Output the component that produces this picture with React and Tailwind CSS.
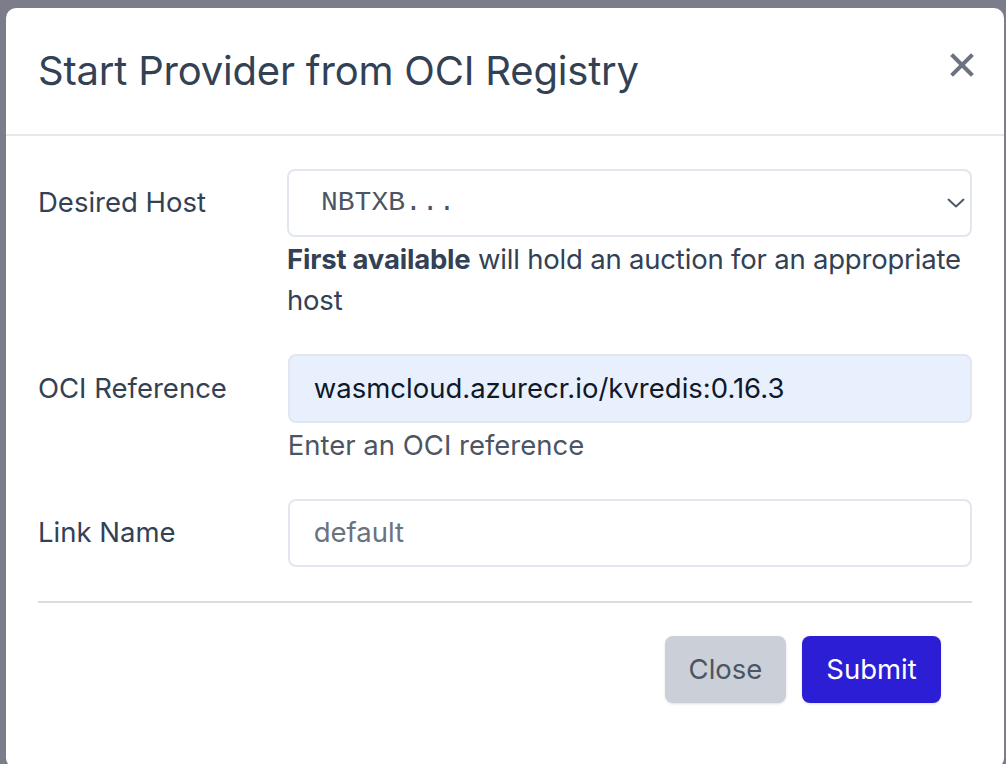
import React from "react";

const font = { fontFamily: "Inter, 'Noto Sans', sans-serif" };

export default function App() {
  return (
    <div className="w-[1006px] h-[764px] bg-[#7b7d8a] overflow-hidden" style={font}>
      <div className="ml-[6px] mt-[8px] w-[998px] h-[760px] rounded-[10px] bg-white flex flex-col">
        <div className="h-[128px] shrink-0 border-b-2 border-[#e5e7eb] px-[32px] flex items-center justify-between">
          <h1 className="text-[40px] text-[#334155] tracking-[-0.2px]">Start Provider from OCI Registry</h1>
          <button className="mr-[-2px] mt-[-12px] text-[#6b7280]">
            <svg width="24" height="24" viewBox="0 0 24 24" fill="none" stroke="currentColor" strokeWidth="4" strokeLinecap="square">
              <path d="M3 3 L21 21 M21 3 L3 21" />
            </svg>
          </button>
        </div>
        <div className="px-[32px] pt-[33px] flex flex-col">
          <div className="flex">
            <div className="w-[250px] h-[68px] flex items-center text-[27.5px] text-[#334155]">Desired Host</div>
            <div className="w-[685px] flex flex-col">
              <div className="h-[68px] rounded-[8px] border-2 border-[#e2e6ee] flex items-center justify-between pl-[32px] pr-[5px]">
                <span className="text-[28px] text-[#4b5563]" style={{ fontFamily: "'Liberation Mono', monospace" }}>NBTXB...</span>
                <svg width="18" height="10" viewBox="0 0 18 10" fill="none" stroke="#4b5563" strokeWidth="1.8" strokeLinecap="round" strokeLinejoin="round">
                  <path d="M1.5 1.5 L9 8.5 L16.5 1.5" />
                </svg>
              </div>
              <p className="mt-[2px] w-[700px] text-[27.5px] leading-[41px] tracking-[-0.2px] text-[#334155]">
                <span className="font-bold">First available</span> will hold an auction for an appropriate host
              </p>
            </div>
          </div>
          <div className="flex mt-[33px]">
            <div className="w-[250px] h-[69px] flex items-center text-[27.5px] text-[#334155]">OCI Reference</div>
            <div className="w-[685px] flex flex-col">
              <div className="h-[69px] rounded-[8px] border-2 border-[#e2e6ee] bg-[#e8f0fe] flex items-center pl-[24px]">
                <span className="text-[27.5px] text-[#111827]">wasmcloud.azurecr.io/kvredis:0.16.3</span>
              </div>
              <p className="mt-[2px] text-[27.5px] leading-[41px] text-[#4b5563]">Enter an OCI reference</p>
            </div>
          </div>
          <div className="flex mt-[33px]">
            <div className="w-[250px] h-[68px] flex items-center text-[27.5px] text-[#334155]">Link Name</div>
            <div className="w-[685px] h-[68px] rounded-[8px] border-2 border-[#e2e6ee] flex items-center pl-[24px]">
              <span className="text-[27.5px] text-[#6b7280]">default</span>
            </div>
          </div>
          <div className="mt-[34px] h-[2px] bg-[#d9dce1]" />
          <div className="mt-[33px] flex justify-end gap-[16px] pr-[31px]">
            <button className="w-[121px] h-[67px] rounded-[8px] bg-[#cbd0d8] text-[27.5px] text-[#4b5563] shadow-sm">Close</button>
            <button className="w-[139px] h-[67px] rounded-[8px] bg-[#2c1ed4] text-[27.5px] text-white shadow-sm">Submit</button>
          </div>
        </div>
      </div>
    </div>
  );
}
